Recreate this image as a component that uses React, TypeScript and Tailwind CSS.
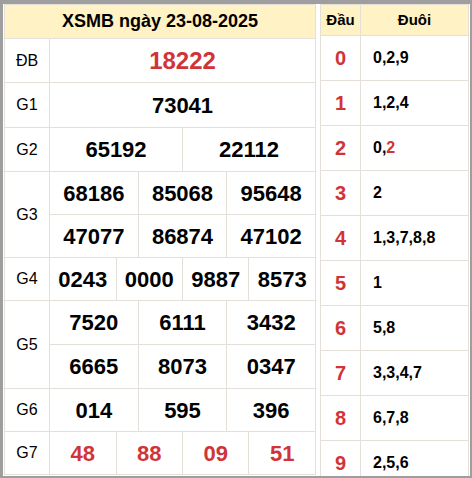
import React from "react";

const RED = "text-[#d13438]";

function Cell({
  children,
  span,
  className = "",
}: {
  children: React.ReactNode;
  span: string;
  className?: string;
}) {
  return (
    <div className={`bg-white flex items-center justify-center ${span} ${className}`}>
      {children}
    </div>
  );
}

export default function App() {
  const num = "text-[22px] font-bold text-black";
  const lab = "text-[16px] text-black";
  const tails: React.ReactNode[] = [
    "0,2,9",
    "1,2,4",
    <>
      0,<span className={RED}>2</span>
    </>,
    "2",
    "1,3,7,8,8",
    "1",
    "5,8",
    "3,3,4,7",
    "6,7,8",
    "2,5,6",
  ];
  return (
    <div className="w-[472px] h-[478px] bg-[#9e9e9e] pl-[3px] pr-[2px] pt-[4px] pb-[2px] font-['Liberation_Sans',Arial,sans-serif] overflow-hidden">
      <div className="h-full bg-white flex items-start pl-[1px] overflow-hidden">
        {/* Left table */}
        <div className="w-[312px] shrink-0 grid grid-cols-[44px_repeat(12,1fr)] grid-rows-[33px_43px_44px_43px_42px_42px_42px_43px_43px_42px_42px] gap-px bg-[#e4e0d9] p-px">
          <div className="col-span-13 bg-[#fff2c4] flex items-center justify-center text-[18px] font-bold text-black">
            XSMB ngày 23-08-2025
          </div>

          <Cell span="col-span-1" className={lab}>ĐB</Cell>
          <Cell span="col-span-12" className={`text-[24px] font-bold ${RED}`}>18222</Cell>

          <Cell span="col-span-1" className={lab}>G1</Cell>
          <Cell span="col-span-12" className={num}>73041</Cell>

          <Cell span="col-span-1" className={lab}>G2</Cell>
          <Cell span="col-span-6" className={num}>65192</Cell>
          <Cell span="col-span-6" className={num}>22112</Cell>

          <Cell span="col-span-1 row-span-2" className={lab}>G3</Cell>
          <Cell span="col-span-4" className={num}>68186</Cell>
          <Cell span="col-span-4" className={num}>85068</Cell>
          <Cell span="col-span-4" className={num}>95648</Cell>
          <Cell span="col-span-4" className={num}>47077</Cell>
          <Cell span="col-span-4" className={num}>86874</Cell>
          <Cell span="col-span-4" className={num}>47102</Cell>

          <Cell span="col-span-1" className={lab}>G4</Cell>
          <Cell span="col-span-3" className={num}>0243</Cell>
          <Cell span="col-span-3" className={num}>0000</Cell>
          <Cell span="col-span-3" className={num}>9887</Cell>
          <Cell span="col-span-3" className={num}>8573</Cell>

          <Cell span="col-span-1 row-span-2" className={lab}>G5</Cell>
          <Cell span="col-span-4" className={num}>7520</Cell>
          <Cell span="col-span-4" className={num}>6111</Cell>
          <Cell span="col-span-4" className={num}>3432</Cell>
          <Cell span="col-span-4" className={num}>6665</Cell>
          <Cell span="col-span-4" className={num}>8073</Cell>
          <Cell span="col-span-4" className={num}>0347</Cell>

          <Cell span="col-span-1" className={lab}>G6</Cell>
          <Cell span="col-span-4" className={num}>014</Cell>
          <Cell span="col-span-4" className={num}>595</Cell>
          <Cell span="col-span-4" className={num}>396</Cell>

          <Cell span="col-span-1" className={lab}>G7</Cell>
          <Cell span="col-span-3" className={`text-[22px] font-bold ${RED}`}>48</Cell>
          <Cell span="col-span-3" className={`text-[22px] font-bold ${RED}`}>88</Cell>
          <Cell span="col-span-3" className={`text-[22px] font-bold ${RED}`}>09</Cell>
          <Cell span="col-span-3" className={`text-[22px] font-bold ${RED}`}>51</Cell>
        </div>

        <div className="w-[4px] shrink-0" />

        {/* Right table */}
        <div className="w-[149px] shrink-0 grid grid-cols-[39px_1fr] auto-rows-[44px] grid-rows-[30px] gap-px bg-[#e4e0d9] p-px">
          <div className="bg-[#fff2c4] flex items-center justify-center text-[15px] font-bold text-black">
            Đầu
          </div>
          <div className="bg-[#fff2c4] flex items-center justify-center text-[15px] font-bold text-black">
            Đuôi
          </div>
          {tails.map((t, i) => (
            <React.Fragment key={i}>
              <div className={`bg-white flex items-center justify-center text-[20px] font-bold ${RED}`}>
                {i}
              </div>
              <div className="bg-white flex items-center pl-[12px] text-[16px] font-bold text-black">
                {t}
              </div>
            </React.Fragment>
          ))}
        </div>
      </div>
    </div>
  );
}
